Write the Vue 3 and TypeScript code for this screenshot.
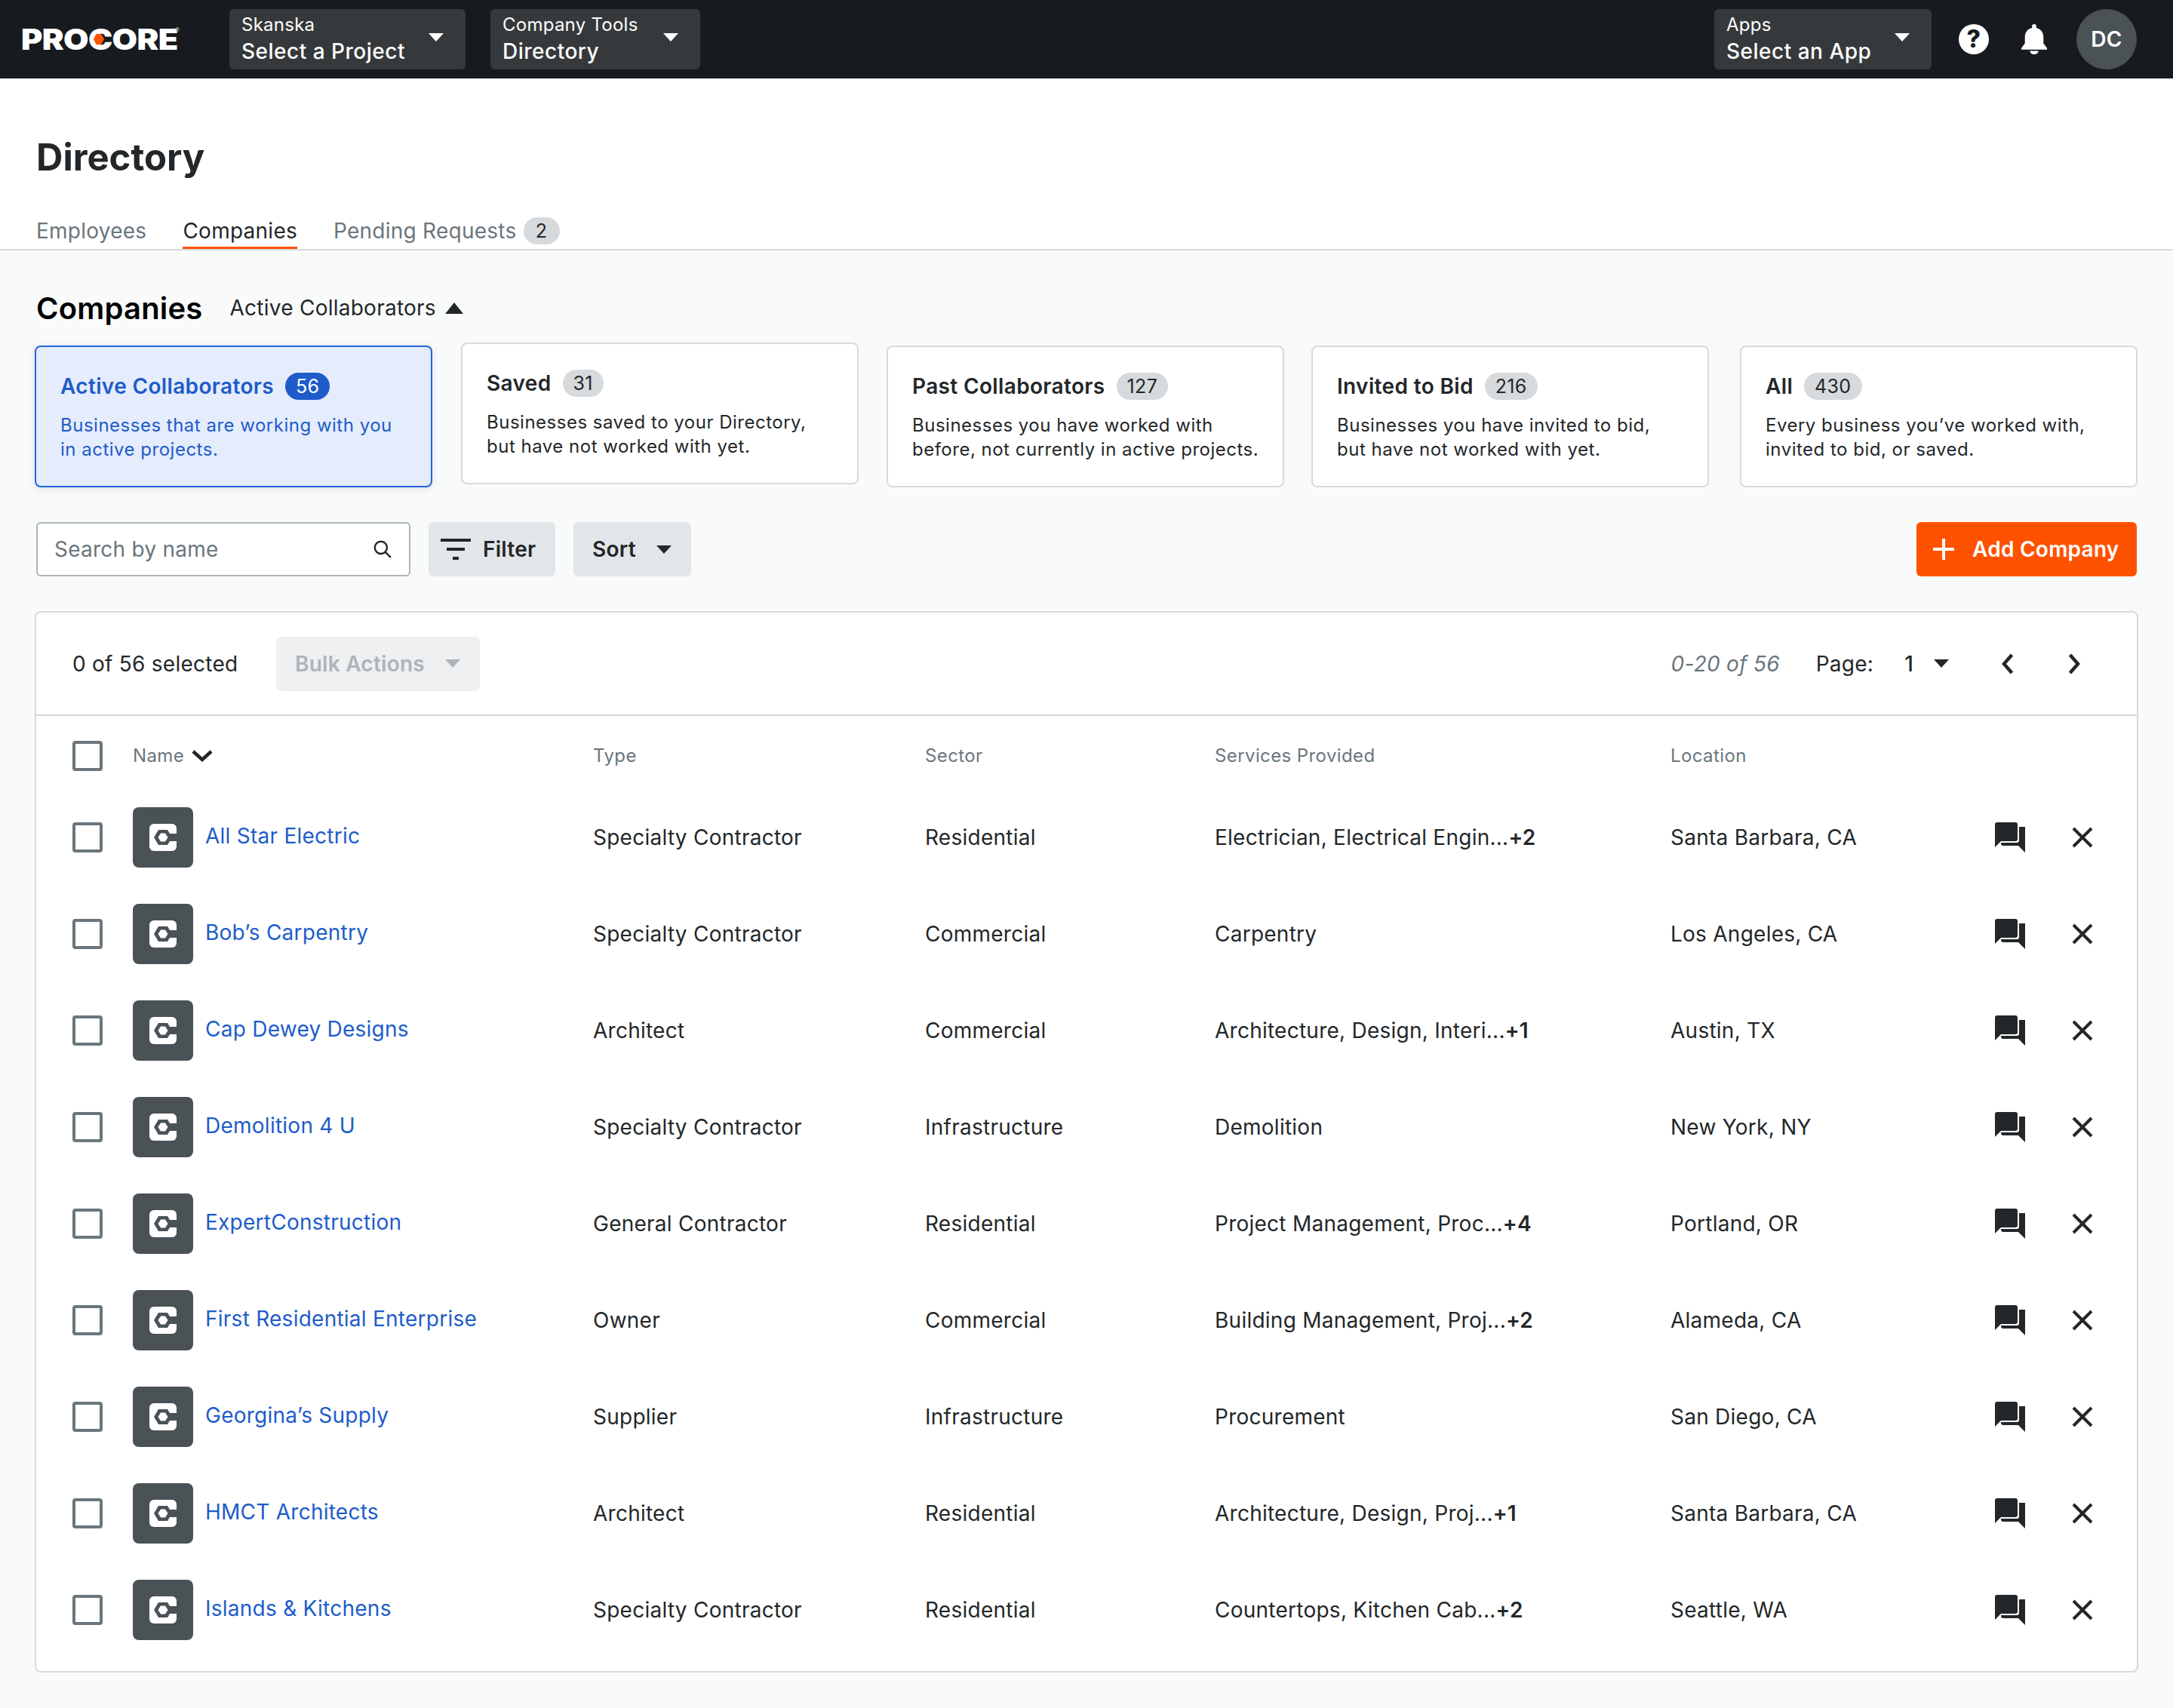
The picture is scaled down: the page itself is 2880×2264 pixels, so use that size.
<template>
  <div class="page">
    <header class="topbar">
      <div class="logo">
        <span class="logo-word">PROCORE</span>
        <i class="logo-dot" />
        <span class="logo-reg">®</span>
      </div>
      <div class="switch switch-project">
        <div>
          <div class="switch-label">Skanska</div>
          <div class="switch-value">Select a Project</div>
        </div>
        <i class="caret caret-white" />
      </div>
      <div class="switch switch-tools">
        <div>
          <div class="switch-label">Company Tools</div>
          <div class="switch-value">Directory</div>
        </div>
        <i class="caret caret-white" />
      </div>
      <div class="switch switch-apps">
        <div>
          <div class="switch-label">Apps</div>
          <div class="switch-value">Select an App</div>
        </div>
        <i class="caret caret-white" />
      </div>
      <div class="help">?</div>
      <svg class="bell" viewBox="0 0 36 44" width="34" height="40" preserveAspectRatio="none">
        <path fill="#fff" d="M15 3a3 3 0 0 1 6 0v2.600C27.500 7 31 12.500 31 19v9l5 7v2H0v-2l5-7v-9C5 12.500 8.500 7 15 5.600ZM12 39h12a6 5 0 0 1-12 0Z" />
      </svg>
      <div class="avatar">DC</div>
    </header>

    <section class="head">
      <h1>Directory</h1>
      <nav class="tabs">
        <span class="tab">Employees</span>
        <span class="tab tab-active">Companies</span>
        <span class="tab">Pending Requests <b class="pill">2</b></span>
      </nav>
    </section>

    <main class="content">
      <div class="section-title">
        <h2>Companies</h2>
        <span class="section-sub">Active Collaborators</span>
        <i class="caret-up" />
      </div>

      <div class="cards">
        <div
          v-for="c in cards"
          :key="c.title"
          class="card"
          :class="{ 'card-active': c.active, 'card-raised': c.title === 'Saved' }"
        >
          <div class="card-title">
            <span>{{ c.title }}</span>
            <b class="pill">{{ c.count }}</b>
          </div>
          <p>{{ c.line1 }}<br />{{ c.line2 }}</p>
        </div>
      </div>

      <div class="actions">
        <div class="search">
          <span>Search by name</span>
          <svg viewBox="0 0 24 24" width="26" height="26" fill="none" stroke="#232729" stroke-width="2.200">
            <circle cx="10" cy="10" r="7.500" />
            <path d="M15.500 15.500 22 22" />
          </svg>
        </div>
        <button class="btn btn-filter">
          <svg viewBox="0 0 40 28" width="40" height="28" fill="#232729">
            <rect x="0" y="0" width="40" height="4" />
            <rect x="8" y="12" width="24" height="4" />
            <rect x="16" y="24" width="8" height="4" />
          </svg>
          Filter
        </button>
        <button class="btn btn-sort">Sort <i class="caret caret-dark" /></button>
        <button class="btn btn-add">
          <svg viewBox="0 0 28 28" width="28" height="28" fill="#fff">
            <rect x="12" y="0" width="4" height="28" />
            <rect x="0" y="12" width="28" height="4" />
          </svg>
          Add Company
        </button>
      </div>

      <div class="table">
        <div class="table-bar">
          <span class="selected">0 of 56 selected</span>
          <div class="bulk">Bulk Actions <i class="caret caret-muted" /></div>
          <span class="range">0-20 of 56</span>
          <span class="page-label">Page:</span>
          <span class="page-num">1</span>
          <i class="caret caret-dark caret-page" />
          <svg class="chev chev-prev" viewBox="0 0 16 28" width="16" height="28" fill="none" stroke="#232729" stroke-width="4.500">
            <path d="M13.500 2 3 14l10.500 12" />
          </svg>
          <svg class="chev chev-next" viewBox="0 0 16 28" width="16" height="28" fill="none" stroke="#232729" stroke-width="4.500">
            <path d="M2.500 2 13 14 2.500 26" />
          </svg>
        </div>

        <div class="row row-head">
          <i class="check" />
          <span class="col-name">
            Name
            <svg viewBox="0 0 28 18" width="28" height="18" fill="none" stroke="#232729" stroke-width="4.500">
              <path d="M2 3l12 11L26 3" />
            </svg>
          </span>
          <span>Type</span>
          <span>Sector</span>
          <span>Services Provided</span>
          <span>Location</span>
        </div>

        <div v-for="r in rows" :key="r.name" class="row">
          <i class="check" />
          <div class="company">
            <div class="company-logo">
              <svg viewBox="0 0 36 36" width="36" height="36">
                <rect width="36" height="36" rx="6" fill="#fff" />
                <path fill="#4a5256" d="M6 18l6-10h12l3 5h9v10h-9l-3 5H12Z" />
                <path fill="#fff" d="M11.500 18l3.500-5.500h6l3.500 5.500-3.500 5.500h-6Z" />
              </svg>
            </div>
            <a>{{ r.name }}</a>
          </div>
          <span>{{ r.type }}</span>
          <span>{{ r.sector }}</span>
          <span>{{ r.services }}<b v-if="r.more">{{ r.more }}</b></span>
          <span>{{ r.location }}</span>
          <svg viewBox="0 0 40 40" width="40" height="40" fill="#232729">
            <path d="M0 3a3 3 0 0 1 3-3h24a3 3 0 0 1 3 3v19a3 3 0 0 1-3 3H8l-8 8Z" />
            <path d="M32 6h8v34l-9-9H11a3 3 0 0 1-3-3v-1h21a3 3 0 0 0 3-3Z" />
          </svg>
          <svg viewBox="0 0 28 28" width="28" height="28" fill="none" stroke="#232729" stroke-width="4">
            <path d="M2 2l24 24M26 2 2 26" />
          </svg>
        </div>
      </div>
    </main>
  </div>
</template>

<script setup lang="ts">
interface Card {
  title: string;
  count: number;
  line1: string;
  line2: string;
  active?: boolean;
}

interface Company {
  name: string;
  type: string;
  sector: string;
  services: string;
  more?: string;
  location: string;
}

const cards: Card[] = [
  { title: 'Active Collaborators', count: 56, line1: 'Businesses that are working with you', line2: 'in active projects.', active: true },
  { title: 'Saved', count: 31, line1: 'Businesses saved to your Directory,', line2: 'but have not worked with yet.' },
  { title: 'Past Collaborators', count: 127, line1: 'Businesses you have worked with', line2: 'before, not currently in active projects.' },
  { title: 'Invited to Bid', count: 216, line1: 'Businesses you have invited to bid,', line2: 'but have not worked with yet.' },
  { title: 'All', count: 430, line1: 'Every business you’ve worked with,', line2: 'invited to bid, or saved.' },
];

const rows: Company[] = [
  { name: 'All Star Electric', type: 'Specialty Contractor', sector: 'Residential', services: 'Electrician, Electrical Engin...', more: '+2', location: 'Santa Barbara, CA' },
  { name: 'Bob’s Carpentry', type: 'Specialty Contractor', sector: 'Commercial', services: 'Carpentry', location: 'Los Angeles, CA' },
  { name: 'Cap Dewey Designs', type: 'Architect', sector: 'Commercial', services: 'Architecture, Design, Interi...', more: '+1', location: 'Austin, TX' },
  { name: 'Demolition 4 U', type: 'Specialty Contractor', sector: 'Infrastructure', services: 'Demolition', location: 'New York, NY' },
  { name: 'ExpertConstruction', type: 'General Contractor', sector: 'Residential', services: 'Project Management, Proc...', more: '+4', location: 'Portland, OR' },
  { name: 'First Residential Enterprise', type: 'Owner', sector: 'Commercial', services: 'Building Management, Proj...', more: '+2', location: 'Alameda, CA' },
  { name: 'Georgina’s Supply', type: 'Supplier', sector: 'Infrastructure', services: 'Procurement', location: 'San Diego, CA' },
  { name: 'HMCT Architects', type: 'Architect', sector: 'Residential', services: 'Architecture, Design, Proj...', more: '+1', location: 'Santa Barbara, CA' },
  { name: 'Islands & Kitchens', type: 'Specialty Contractor', sector: 'Residential', services: 'Countertops, Kitchen Cab...', more: '+2', location: 'Seattle, WA' },
];
</script>

<style>
html,
body {
  margin: 0;
  background: #f9fafa;
}
</style>

<style scoped>
.page {
  width: 2880px;
  height: 2264px;
  overflow: hidden;
  font-family: Inter, 'Liberation Sans', sans-serif;
  font-size: 28px;
  color: #232729;
  background: #f9fafa;
  letter-spacing: 0.25px;
}

/* top bar */
.topbar {
  height: 104px;
  background: #171b1f;
  display: flex;
  align-items: center;
  color: #fff;
}
.logo {
  position: relative;
  width: 206px;
  margin-left: 28px;
  margin-right: 70px;
  height: 40px;
  line-height: 40px;
}
.logo-word {
  display: inline-block;
  font-size: 38px;
  font-weight: 900;
  letter-spacing: -0.6px;
  transform: scaleX(1.14);
  transform-origin: left center;
}
.logo-dot {
  position: absolute;
  left: 96px;
  top: 13px;
  width: 14px;
  height: 14px;
  background: #ff5200;
  clip-path: polygon(0 50%, 25% 0, 75% 0, 100% 50%, 75% 100%, 25% 100%);
}
.logo-reg {
  position: absolute;
  left: 204px;
  top: -12px;
  font-size: 9px;
  color: #acb5b9;
}
.switch {
  height: 80px;
  box-sizing: border-box;
  padding: 0 29px 0 16px;
  background: #36393b;
  border-radius: 6px;
  display: flex;
  align-items: center;
  justify-content: space-between;
}
.switch-project {
  width: 313px;
}
.switch-tools {
  width: 278px;
  margin-left: 33px;
  margin-right: auto;
}
.switch-apps {
  width: 288px;
}
.switch-label {
  font-size: 24px;
  line-height: 32px;
  font-weight: 400;
}
.switch-value {
  font-size: 28px;
  line-height: 38px;
  font-weight: 500;
  letter-spacing: 0.5px;
}
.help {
  width: 40px;
  height: 40px;
  margin-left: 36px;
  border-radius: 50%;
  background: #fff;
  color: #171b1f;
  font-size: 32px;
  font-weight: 800;
  line-height: 40px;
  text-align: center;
}
.bell {
  margin-left: 43px;
}
.avatar {
  width: 80px;
  height: 80px;
  margin-left: 39px;
  margin-right: 48px;
  border-radius: 50%;
  background: #4a5256;
  font-size: 28px;
  font-weight: 600;
  line-height: 80px;
  text-align: center;
}

.caret {
  display: inline-block;
  width: 0;
  height: 0;
  border-left: 10px solid transparent;
  border-right: 10px solid transparent;
  border-top: 11px solid #fff;
  flex: none;
}
.caret-white {
  margin-bottom: 6px;
}
.caret-dark {
  border-top-color: #232729;
}
.caret-muted {
  border-top-color: #acb5b9;
}

/* page heading */
.head {
  background: #fff;
  height: 228px;
  box-sizing: border-box;
  border-bottom: 2px solid #d6dadc;
  padding: 75px 48px 0;
}
h1 {
  margin: 0 0 52px;
  font-size: 49px;
  line-height: 60px;
  font-weight: 700;
  letter-spacing: 0;
}
.tabs {
  display: flex;
  gap: 48px;
  color: #6a767c;
}
.tab {
  display: flex;
  align-items: center;
  height: 39px;
  box-sizing: border-box;
  padding-bottom: 9px;
  gap: 9px;
}
.tab-active {
  color: #232729;
  border-bottom: 3px solid #ff5200;
  padding-bottom: 6px;
}
.pill {
  display: inline-block;
  min-width: 48px;
  height: 36px;
  box-sizing: border-box;
  padding: 0 12px;
  border-radius: 18px;
  background: #d6dadc;
  color: #232729;
  font-size: 25px;
  font-weight: 400;
  line-height: 36px;
  text-align: center;
}

/* content */
.content {
  padding: 0 46px 0;
}
.section-title {
  display: flex;
  align-items: center;
  height: 44px;
  margin-top: 54px;
  padding-left: 2px;
}
h2 {
  margin: 0 36px 0 0;
  font-size: 40px;
  font-weight: 600;
  color: #000;
  letter-spacing: 0.2px;
}
.section-sub {
  font-size: 28px;
}
.caret-up {
  margin-left: 12px;
  width: 0;
  height: 0;
  border-left: 12px solid transparent;
  border-right: 12px solid transparent;
  border-bottom: 15px solid #232729;
}

.cards {
  display: flex;
  gap: 38px;
  margin-top: 28px;
}
.card {
  width: 527px;
  height: 188px;
  box-sizing: border-box;
  padding: 34px 10px 0 32px;
  background: #fff;
  border: 2px solid #d6dadc;
  border-radius: 8px;
}
.card:nth-child(3) {
  margin-left: -1px;
}
.card:nth-child(4) {
  margin-left: -2px;
}
.card:nth-child(5) {
  margin-left: 3px;
}
.card-raised {
  margin-top: -4px;
  margin-bottom: 4px;
}
.card-active {
  background: #e5ecfb;
  border-color: #2066df;
  color: #1d5cc9;
  box-shadow: 0 2px 12px rgba(35, 39, 41, 0.12);
}
.card-active .pill {
  background: #1d5cc9;
  color: #fff;
}
.card-title {
  display: flex;
  align-items: center;
  gap: 15px;
  font-weight: 600;
  height: 36px;
  letter-spacing: 0.35px;
}
.card-title .pill {
  padding: 0 14px;
}
.card p {
  margin: 18px 0 0;
  font-size: 24px;
  line-height: 32px;
  letter-spacing: 0.5px;
}

.actions {
  display: flex;
  margin-top: 46px;
  gap: 24px;
  padding: 0 2px;
}
.search {
  width: 496px;
  height: 72px;
  box-sizing: border-box;
  border: 2px solid #acb5b9;
  border-radius: 6px;
  background: #fff;
  color: #6a767c;
  padding: 0 22px;
  display: flex;
  align-items: center;
  justify-content: space-between;
}
.btn {
  height: 72px;
  border: 0;
  border-radius: 6px;
  background: #e3e6e8;
  color: #232729;
  font: inherit;
  font-weight: 600;
  letter-spacing: inherit;
  display: flex;
  align-items: center;
}
.btn-filter {
  width: 168px;
  padding: 0 0 0 16px;
  gap: 16px;
}
.btn-sort {
  width: 156px;
  padding: 0 26px 0 25px;
  justify-content: space-between;
}
.btn-add {
  width: 292px;
  margin-left: auto;
  padding: 0 0 0 22px;
  gap: 24px;
  background: #ff5200;
  color: #fff;
}

/* table */
.table {
  margin-top: 46px;
  height: 1407px;
  box-sizing: border-box;
  background: #fff;
  border: 2px solid #d6dadc;
  border-radius: 8px;
}
.table-bar {
  height: 137px;
  box-sizing: border-box;
  border-bottom: 2px solid #d6dadc;
  display: flex;
  align-items: center;
  padding-left: 48px;
}
.selected {
  width: 270px;
}
.bulk {
  width: 270px;
  height: 72px;
  box-sizing: border-box;
  margin-right: auto;
  padding: 0 26px 0 25px;
  background: #eef0f1;
  border-radius: 6px;
  color: #acb5b9;
  font-weight: 600;
  display: flex;
  align-items: center;
  justify-content: space-between;
}
.range {
  font-style: italic;
  color: #6a767c;
  margin-right: 48px;
}
.page-label {
  margin-right: 41px;
}
.page-num {
  font-weight: 500;
  margin-right: 27px;
}
.caret-page {
  margin-right: 70px;
}
.chev-prev {
  margin-right: 72px;
}
.chev-next {
  margin-right: 75px;
}

.row {
  display: grid;
  grid-template-columns: 80px 610px 440px 384px 604px 430px 102px 30px;
  align-items: center;
  height: 128px;
  padding-left: 48px;
}
.row-head {
  height: 97px;
  padding-top: 8px;
  box-sizing: border-box;
  font-size: 24px;
  letter-spacing: 0.4px;
  color: #6a767c;
}
.col-name {
  display: flex;
  align-items: center;
  gap: 10px;
}
.check {
  display: block;
  width: 40px;
  height: 40px;
  box-sizing: border-box;
  border: 4px solid #6a767c;
  border-radius: 4px;
  background: #fff;
}
.company {
  display: flex;
  align-items: center;
  gap: 16px;
}
.company-logo {
  width: 80px;
  height: 80px;
  border-radius: 8px;
  background: #4a5256;
  display: flex;
  align-items: center;
  justify-content: center;
}
.company a {
  color: #1d5cc9;
  margin-top: -4px;
}
.row b {
  font-weight: 600;
}
</style>
